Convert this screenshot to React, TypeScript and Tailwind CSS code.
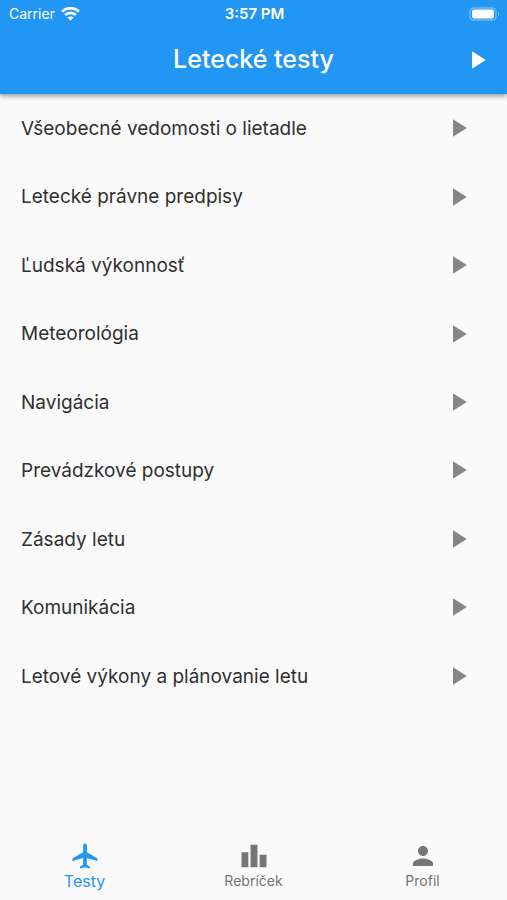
import { MdAirplanemodeActive, MdLeaderboard, MdPerson, MdPlayArrow } from "react-icons/md";

const TOPICS = [
  "Všeobecné vedomosti o lietadle",
  "Letecké právne predpisy",
  "Ľudská výkonnosť",
  "Meteorológia",
  "Navigácia",
  "Prevádzkové postupy",
  "Zásady letu",
  "Komunikácia",
  "Letové výkony a plánovanie letu",
];

function StatusBar() {
  return (
    <div className="grid h-7 grid-cols-3 items-center pr-[7px] pl-[9px] text-sm">
      <div className="flex items-center gap-1.5">
        <span>Carrier</span>
        <svg viewBox="0 0 18 13" className="h-[14px] w-[19px]" fill="none" stroke="currentColor">
          <path d="M1 4.2C5.5 -0.2 12.5 -0.2 17 4.2" strokeWidth="2.5" />
          <path d="M3.9 7.5C6.8 4.7 11.2 4.7 14.1 7.5" strokeWidth="2.5" />
          <path d="M6.2 9.9C7.8 8.5 10.2 8.5 11.8 9.9L9 12.8Z" fill="currentColor" stroke="none" />
        </svg>
      </div>
      <span className="text-center text-[15px] font-semibold">3:57 PM</span>
      <svg viewBox="0 0 31 14" className="h-3.5 w-[31px] justify-self-end" fill="none">
        <rect x="1" y="1" width="26" height="12" rx="3.6" stroke="#fff" strokeOpacity="0.35" strokeWidth="1.4" />
        <rect x="3" y="2.6" width="22" height="8.8" rx="2" fill="#fff" />
        <path d="M29 5C30.4 5.5 30.4 8.5 29 9Z" fill="#fff" fillOpacity="0.45" />
      </svg>
    </div>
  );
}

export default function App() {
  return (
    <div className="flex min-h-screen flex-col bg-[#fafafa] font-['Inter',sans-serif] text-[#303030]">
      <header className="z-10 bg-[#2196f3] text-white shadow-[0_2px_5px_rgba(0,0,0,0.4)]">
        <StatusBar />
        <div className="grid h-[66px] grid-cols-[60px_1fr_60px] items-center pb-0.5">
          <h1 className="col-start-2 text-center text-[25px] font-medium">Letecké testy</h1>
          <button aria-label="Spustiť" className="flex justify-center">
            <MdPlayArrow className="size-[30px]" />
          </button>
        </div>
      </header>

      <main className="flex-1">
        <ul className="grid min-h-[616px] auto-rows-fr">
          {TOPICS.map((topic) => (
            <li key={topic} className="flex">
              <button className="flex flex-1 items-center justify-between pr-[34px] pl-[21px] text-left text-[19px]">
                <span className="pt-0.5">{topic}</span>
                <MdPlayArrow className="size-[30px] text-[#868686]" />
              </button>
            </li>
          ))}
        </ul>
      </main>

      <nav className="grid h-[73px] grid-cols-3 border-t border-[#f7f7f7] pt-[13px] text-sm text-[#757575]">
        <a href="#testy" aria-current="page" className="flex flex-col items-center text-base/5 text-[#2196f3]">
          <MdAirplanemodeActive className="size-[30px]" />
          Testy
        </a>
        <a href="#rebricek" className="flex flex-col items-center">
          <MdLeaderboard className="size-[30px]" />
          Rebríček
        </a>
        <a href="#profil" className="flex flex-col items-center">
          <MdPerson className="size-[30px]" />
          Profil
        </a>
      </nav>
    </div>
  );
}
